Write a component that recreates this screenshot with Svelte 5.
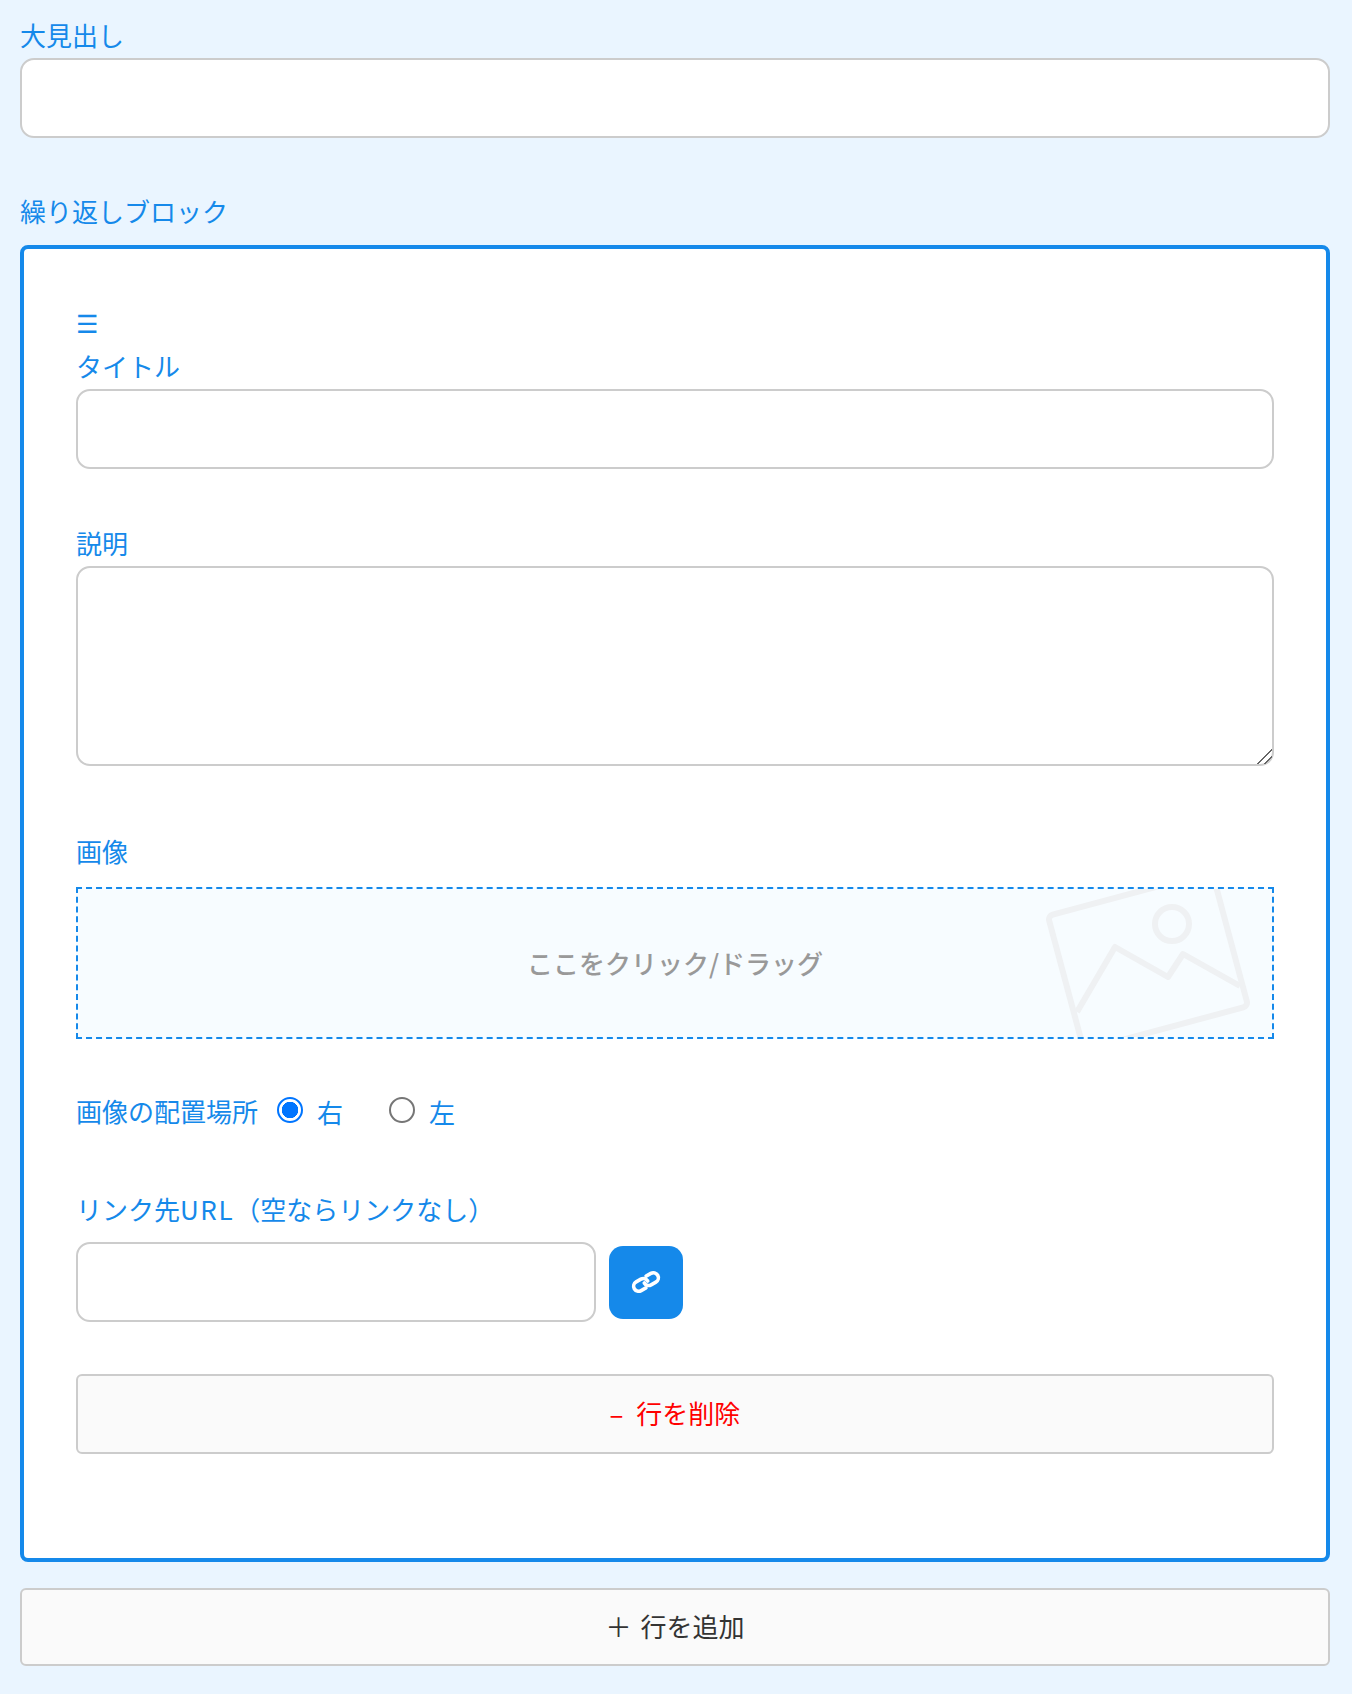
<script>
  let imagePos = $state('right');
</script>

<div class="page">
  <div class="field">
    <label class="label" for="heading">大見出し</label>
    <input id="heading" class="text-input" type="text" />
  </div>

  <div class="field repeat">
    <div class="label">繰り返しブロック</div>
    <div class="block">
      <div class="handle">☰</div>

      <div class="field title-field">
        <label class="label" for="title">タイトル</label>
        <input id="title" class="text-input" type="text" />
      </div>

      <div class="field desc-field">
        <label class="label" for="desc">説明</label>
        <textarea id="desc" class="text-input area"></textarea>
      </div>

      <div class="field image-field">
        <div class="label">画像</div>
        <div class="dropzone">
          <span>ここをクリック/ドラッグ</span>
          <svg class="photo" viewBox="0 0 300 148" aria-hidden="true">
            <g fill="none" stroke="#eff1f3" stroke-width="6" stroke-linejoin="round">
              <rect x="91" y="2.5" width="170" height="139" rx="5" transform="rotate(-15 176 72)" />
              <circle cx="200" cy="35" r="17" />
              <path d="M105 123 143 58 196 88 211 65 268 97" />
            </g>
          </svg>
        </div>
      </div>

      <div class="field radios">
        <span class="label inline">画像の配置場所</span>
        <label class="radio">
          <input type="radio" name="pos" value="right" bind:group={imagePos} />
          <span>右</span>
        </label>
        <label class="radio">
          <input type="radio" name="pos" value="left" bind:group={imagePos} />
          <span>左</span>
        </label>
      </div>

      <div class="field url-field">
        <label class="label" for="url">リンク先<span class="latin">URL</span>（空ならリンクなし）</label>
        <div class="url-row">
          <input id="url" class="text-input url" type="text" />
          <button class="link-btn" type="button" aria-label="リンク">
            <svg viewBox="-16 -16 32 32" width="32" height="32" fill="none" stroke="#fff" stroke-width="3.6" stroke-linecap="round">
              <g transform="rotate(-30)">
                <path d="M-3 5H-8.5a5 5 0 0 1 0-10H-3a5 5 0 0 1 5 5" />
                <path d="M3-5H8.5a5 5 0 0 1 0 10H3a5 5 0 0 1-5-5" />
              </g>
            </svg>
          </button>
        </div>
      </div>

      <button class="wide-btn remove" type="button">– 行を削除</button>
    </div>
  </div>

  <button class="wide-btn add" type="button">＋ 行を追加</button>
</div>

<style>
  :global(body) {
    background: #eaf5ff;
  }

  .page {
    padding: 17px 22px 28px 20px;
    font-family: "Noto Sans CJK JP", "Noto Sans", sans-serif;
    font-size: 26px;
    color: #333;
  }

  .field {
    margin-bottom: 55px;
  }

  .label {
    display: block;
    line-height: 36px;
    margin-bottom: 5px;
    color: #1589ea;
  }

  .label.inline {
    display: inline;
    margin: 0;
  }

  .latin {
    letter-spacing: 1.6px;
  }

  .text-input {
    display: block;
    box-sizing: border-box;
    width: 100%;
    height: 80px;
    margin: 0;
    background: #fff;
    border: 2px solid #ccc;
    border-radius: 14px;
    font: inherit;
    outline: none;
  }

  .area {
    height: 200px;
  }

  .area::-webkit-resizer {
    background: linear-gradient(135deg, transparent 47%, #666 47%, #666 54%, transparent 54%, transparent 72%, #666 72%, #666 78%, transparent 78%);
  }

  .repeat {
    margin-bottom: 26px;
  }

  .repeat > .label {
    margin-bottom: 16px;
  }

  .block {
    box-sizing: border-box;
    background: #fff;
    border: 4px solid #1589ea;
    border-radius: 8px;
    padding: 58px 52px 104px;
  }

  .handle {
    height: 41px;
    line-height: 36px;
    font-family: "DejaVu Sans", sans-serif;
    font-size: 25px;
    color: #1589ea;
  }

  .title-field {
    margin-bottom: 56px;
  }

  .desc-field {
    margin-bottom: 67px;
  }

  .image-field {
    margin-bottom: 54px;
  }

  .image-field .label {
    margin-bottom: 18px;
  }

  .dropzone {
    position: relative;
    box-sizing: border-box;
    height: 152px;
    display: flex;
    align-items: center;
    justify-content: center;
    overflow: hidden;
    background: #f7fcff;
    border: 2px dashed #1589ea;
    font-weight: 500;
    color: #999;
  }

  .dropzone span {
    position: relative;
    z-index: 1;
    margin-bottom: 2px;
  }

  .photo {
    position: absolute;
    top: 0;
    right: 0;
    width: 300px;
    height: 148px;
  }

  .radios {
    display: flex;
    align-items: center;
    height: 36px;
    margin-bottom: 62px;
  }

  .radio {
    display: flex;
    align-items: center;
    color: #1589ea;
    margin-left: 19px;
    margin-right: 27px;
  }

  .radio input {
    appearance: none;
    box-sizing: border-box;
    width: 26px;
    height: 26px;
    margin: 0 14px 2px 0;
    background: #fff;
    border: 2px solid #767676;
    border-radius: 50%;
  }

  .radio input:checked {
    border-color: #0075ff;
    background: radial-gradient(circle, #0075ff 0 8px, #fff 8.5px);
  }

  .url-field {
    margin-bottom: 52px;
  }

  .url-field .label {
    margin-bottom: 15px;
  }

  .url-row {
    display: flex;
    align-items: center;
    gap: 13px;
  }

  .url {
    width: 520px;
  }

  .link-btn {
    display: flex;
    align-items: center;
    justify-content: center;
    width: 74px;
    height: 73px;
    padding: 0;
    border: none;
    border-radius: 14px;
    background: #1589ea;
  }

  .wide-btn {
    display: block;
    box-sizing: border-box;
    width: 100%;
    height: 80px;
    padding: 0 0 4px;
    background: #fafafa;
    border: 2px solid #ccc;
    border-radius: 6px;
    font: inherit;
    word-spacing: 3px;
    cursor: pointer;
  }

  .remove {
    color: #f00;
    word-spacing: 7px;
  }

  .add {
    height: 78px;
    color: #333;
  }
</style>
